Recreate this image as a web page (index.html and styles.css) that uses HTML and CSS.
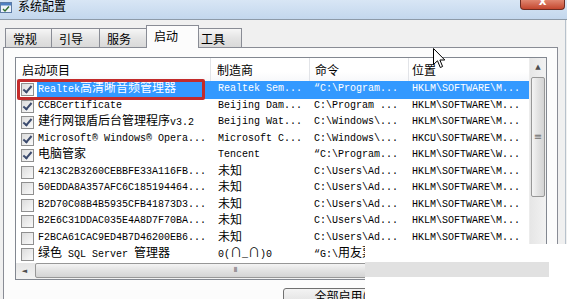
FILE: index.html
```html
<!DOCTYPE html>
<html lang="zh-CN">
<head>
    <meta charset="UTF-8">
    <title>系统配置</title>
    <link rel="stylesheet" href="styles.css">
</head>
<body>
    <div class="window">
        <div class="titlebar">
            <svg class="app-icon" width="12" height="13" viewBox="0 0 12 13">
                <rect x="0.5" y="1.5" width="11" height="10" fill="#eef3f9" stroke="#5c7ba6"/>
                <rect x="1" y="2" width="10" height="2.5" fill="#4f80c2"/>
                <path d="M3 8 L5 10 L9 5.5" stroke="#2f6e2f" stroke-width="1.4" fill="none"/>
            </svg>
            <span class="title">系统配置</span>
            <div class="close">x</div>
        </div>
        <div class="main">
            <div class="tabs">
                <div class="tab t1">常规</div>
                <div class="tab t2">引导</div>
                <div class="tab t3">服务</div>
                <div class="tab t4 active">启动</div>
                <div class="tab t5">工具</div>
            </div>
            <div class="panel">
                <div class="list">
                    <div class="list-body">
                        <div class="grid">
                            <div class="head">
                                <div class="hcell wide">启动项目</div>
                                <div class="hcell">制造商</div>
                                <div class="hcell">命令</div>
                                <div class="hcell last">位置</div>
                            </div>

                            <div class="row selected">
                                <div class="chk on"></div>
                                <div class="cell c1">Realtek<span class="cn">高清晰音频管理器</span></div>
                                <div class="cell c2">Realtek Sem...</div>
                                <div class="cell c3">“C:\Program...</div>
                                <div class="cell c4">HKLM\SOFTWARE\M...</div>
                            </div>
                            <div class="row">
                                <div class="chk on"></div>
                                <div class="cell c1">CCBCertificate</div>
                                <div class="cell c2">Beijing Dam...</div>
                                <div class="cell c3">C:\Program ...</div>
                                <div class="cell c4">HKLM\SOFTWARE\M...</div>
                            </div>
                            <div class="row">
                                <div class="chk on"></div>
                                <div class="cell c1"><span class="cn">建行网银盾后台管理程序</span>v3.2</div>
                                <div class="cell c2">Beijing Wat...</div>
                                <div class="cell c3">C:\Windows\...</div>
                                <div class="cell c4">HKLM\SOFTWARE\M...</div>
                            </div>
                            <div class="row">
                                <div class="chk on"></div>
                                <div class="cell c1">Microsoft® Windows® Opera...</div>
                                <div class="cell c2">Microsoft C...</div>
                                <div class="cell c3">C:\Windows\...</div>
                                <div class="cell c4">HKCU\SOFTWARE\M...</div>
                            </div>
                            <div class="row">
                                <div class="chk on"></div>
                                <div class="cell c1"><span class="cn">电脑管家</span></div>
                                <div class="cell c2">Tencent</div>
                                <div class="cell c3">“C:\Program...</div>
                                <div class="cell c4">HKLM\SOFTWARE\W...</div>
                            </div>
                            <div class="row">
                                <div class="chk"></div>
                                <div class="cell c1">4213C2B3260CEBBFE33A116FB...</div>
                                <div class="cell c2"><span class="cn">未知</span></div>
                                <div class="cell c3">C:\Users\Ad...</div>
                                <div class="cell c4">HKLM\SOFTWARE\M...</div>
                            </div>
                            <div class="row">
                                <div class="chk"></div>
                                <div class="cell c1">50EDDA8A357AFC6C185194464...</div>
                                <div class="cell c2"><span class="cn">未知</span></div>
                                <div class="cell c3">C:\Users\Ad...</div>
                                <div class="cell c4">HKLM\SOFTWARE\M...</div>
                            </div>
                            <div class="row">
                                <div class="chk"></div>
                                <div class="cell c1">B2D70C08B4B5935CFB41873D3...</div>
                                <div class="cell c2"><span class="cn">未知</span></div>
                                <div class="cell c3">C:\Users\Ad...</div>
                                <div class="cell c4">HKLM\SOFTWARE\M...</div>
                            </div>
                            <div class="row">
                                <div class="chk"></div>
                                <div class="cell c1">B2E6C31DDAC035E4A8D7F70BA...</div>
                                <div class="cell c2"><span class="cn">未知</span></div>
                                <div class="cell c3">C:\Users\Ad...</div>
                                <div class="cell c4">HKLM\SOFTWARE\M...</div>
                            </div>
                            <div class="row">
                                <div class="chk"></div>
                                <div class="cell c1">F2BCA61CAC9ED4B7D46200EB6...</div>
                                <div class="cell c2"><span class="cn">未知</span></div>
                                <div class="cell c3">C:\Users\Ad...</div>
                                <div class="cell c4">HKLM\SOFTWARE\M...</div>
                            </div>
                            <div class="row">
                                <div class="chk"></div>
                                <div class="cell c1"><span class="cn">绿色</span> SQL Server <span class="cn">管理器</span></div>
                                <div class="cell c2">0(<span class="cn">∩</span>_<span class="cn">∩</span>)0</div>
                                <div class="cell c3">“G:\<span class="cn">用友票</span></div>
                                <div class="cell c4"></div>
                            </div>
                        </div>
                        <div class="vscroll">
                            <div class="arrow up">▲</div>
                            <div class="vthumb">≡</div>
                        </div>
                    </div>
                    <div class="hscroll">
                        <div class="arrow left">◄</div>
                        <div class="hthumb">III</div>
                    </div>
                </div>
                <div class="actions">
                    <button class="btn">全部启用(E)</button>
                </div>
            </div>
        </div>

        <!-- 标注框、鼠标、遮挡块 -->
        <div class="mark"></div>
        <svg class="cursor" width="13" height="21" viewBox="0 0 13 21">
            <path d="M0.5 0.5 L0.5 16.5 L4.5 12.8 L7.3 19.5 L9.6 18.5 L6.9 12 L11.8 12 Z" fill="#fff" stroke="#000" stroke-width="1"/>
        </svg>
        <div class="patch"><div class="patch-bar"></div></div>
    </div>
</body>
</html>
```

FILE: styles.css
```css
* {
    margin: 0;
    padding: 0;
    box-sizing: border-box;
}
body {
    width: 567px;
    height: 299px;
    overflow: hidden;
    background: #f0f0f0;
    font-family: "Noto Sans CJK SC", sans-serif;
    font-size: 12px;
    color: #000;
}
.window {
    position: relative;
    width: 567px;
    height: 299px;
    overflow: hidden;
}
.titlebar {
    height: 20px;
    display: flex;
    align-items: flex-start;
    background: linear-gradient(#d8e6f5, #c3d7ed);
    border-bottom: 1px solid #8d9aa8;
}
.app-icon {
    margin: 1px 6px 0 0;
}
.title {
    font-size: 12px;
    line-height: 12px;
}
.close {
    margin-left: auto;
    margin-right: 2px;
    width: 45px;
    height: 10px;
    background: linear-gradient(#e08670, #c4472f);
    border: 1px solid #6e2c22;
    border-top: 0;
    border-radius: 0 0 4px 4px;
    color: #fff;
    font-family: "DejaVu Sans", sans-serif;
    font-weight: bold;
    font-size: 12px;
    line-height: 2px;
    text-align: center;
}
.main {
    width: 566px;
    height: 279px;
    padding: 5px 0 0 3px;
    border-right: 1px solid #b8c2cc;
}
.tabs {
    display: flex;
    height: 23px;
    margin-bottom: -1px;
    padding-left: 2px;
    position: relative;
    z-index: 1;
}
.tab {
    height: 19px;
    margin-top: 3px;
    padding-left: 7px;
    line-height: 19px;
    border: 1px solid #898c95;
    border-bottom: 0;
    background: linear-gradient(#f6f6f6, #e4e4e4 50%, #d9d9d9);
    white-space: nowrap;
}
.t1 { width: 47px; }
.t2 { width: 49px; margin-left: -1px; }
.t3 { width: 48px; margin-left: -1px; }
.t4 { width: 53px; margin-left: -1px; }
.t5 { width: 44px; margin-left: -1px; padding-left: 2px; }
.tab.active {
    height: 23px;
    margin-top: 0;
    line-height: 19px;
    background: #fcfcfc;
}
.panel {
    width: 555px;
    height: 260px;
    padding: 9px 0 0 11px;
    border: 1px solid #898c95;
    background: #fcfcfc;
}
.list {
    width: 532px;
    border: 1px solid #828790;
    background: #fff;
}
.list-body {
    display: flex;
    height: 204.5px;
}
.grid {
    width: 513px;
}
.head {
    display: grid;
    grid-template-columns: 195px 99px 99px 120px;
    height: 23px;
    background: linear-gradient(#fff, #fff 60%, #f7f8fa);
}
.hcell {
    line-height: 23px;
    padding-left: 3px;
    border-right: 1px solid #e2e4e8;
    white-space: nowrap;
}
.hcell.wide { padding-left: 6px; }
.hcell:nth-child(2) { padding-left: 6px; }
.hcell:nth-child(3) { padding-left: 5px; }
.hcell.last { border-right: 0; }
.row {
    display: grid;
    grid-template-columns: 21px 174px 99px 99px 120px;
    height: 16.5px;
    font-family: "Liberation Mono", "Noto Sans CJK SC", monospace;
    font-size: 10px;
    line-height: 16.5px;
}
.cell {
    white-space: nowrap;
}
.cn {
    font-family: "Noto Sans CJK SC", sans-serif;
    font-size: 12px;
    line-height: 12px;
}
.c1 { padding-left: 1px; }
.c2 { padding-left: 7px; }
.c3 { padding-left: 4px; }
.c4 { padding-left: 3px; }
.row.selected .cell {
    background: #3399ff;
    color: #fff;
}
.chk {
    width: 13px;
    height: 13px;
    margin: 2px 0 0 5px;
    border: 1px solid #8f8f8f;
    background: linear-gradient(135deg, #dcdcdc, #fafafa);
    position: relative;
}
.chk.on::after {
    content: "";
    position: absolute;
    left: 3px;
    top: 0px;
    width: 3px;
    height: 7px;
    border: solid #3c4b6e;
    border-width: 0 2px 2px 0;
    transform: rotate(40deg);
}
.vscroll {
    width: 17px;
    background: linear-gradient(90deg, #e6e6e6, #f2f2f2);
    border-left: 1px solid #ececec;
    display: flex;
    flex-direction: column;
    align-items: center;
}
.arrow {
    color: #4d4d4d;
    font-family: "DejaVu Sans", sans-serif;
    font-size: 7px;
    text-align: center;
}
.arrow.up {
    height: 18px;
    width: 16px;
    line-height: 18px;
}
.vthumb {
    width: 14px;
    height: 120px;
    margin-top: 1px;
    border: 1px solid #979797;
    border-radius: 2px;
    background: linear-gradient(90deg, #f4f4f4, #e2e2e2 50%, #d4d4d4);
    color: #707070;
    font-family: "DejaVu Sans", sans-serif;
    font-size: 10px;
    line-height: 118px;
    text-align: center;
}
.hscroll {
    display: flex;
    height: 16px;
    background: linear-gradient(#e6e6e6, #f2f2f2);
}
.arrow.left {
    width: 17px;
    line-height: 16px;
}
.hthumb {
    width: 400px;
    height: 15px;
    margin: 0 0 0 2px;
    border: 1px solid #979797;
    border-radius: 2px;
    background: linear-gradient(#f4f4f4, #e2e2e2 50%, #d4d4d4);
    color: #707070;
    font-family: "DejaVu Sans", sans-serif;
    font-size: 7px;
    line-height: 13px;
    text-align: center;
    letter-spacing: -1px;
}
.actions {
    padding: 7px 0 0 268px;
}
.btn {
    width: 126px;
    height: 23px;
    padding-bottom: 8px;
    border: 1px solid #707070;
    border-radius: 3px;
    background: linear-gradient(#f3f3f3, #e6e6e6 50%, #dcdcdc);
    font-family: "Noto Sans CJK SC", sans-serif;
    font-size: 12px;
    line-height: 12px;
    color: #000;
}
.mark {
    position: absolute;
    left: 17px;
    top: 79px;
    width: 188px;
    height: 21px;
    border: 3px solid #c32b2b;
    border-radius: 2px;
}
.cursor {
    position: absolute;
    left: 433px;
    top: 48px;
}
.patch {
    position: absolute;
    left: 365px;
    top: 244px;
    width: 202px;
    height: 55px;
    background: #fff;
    padding-top: 18px;
}
.patch-bar {
    width: 184px;
    height: 15px;
    background: #e1e1e1;
}
```
